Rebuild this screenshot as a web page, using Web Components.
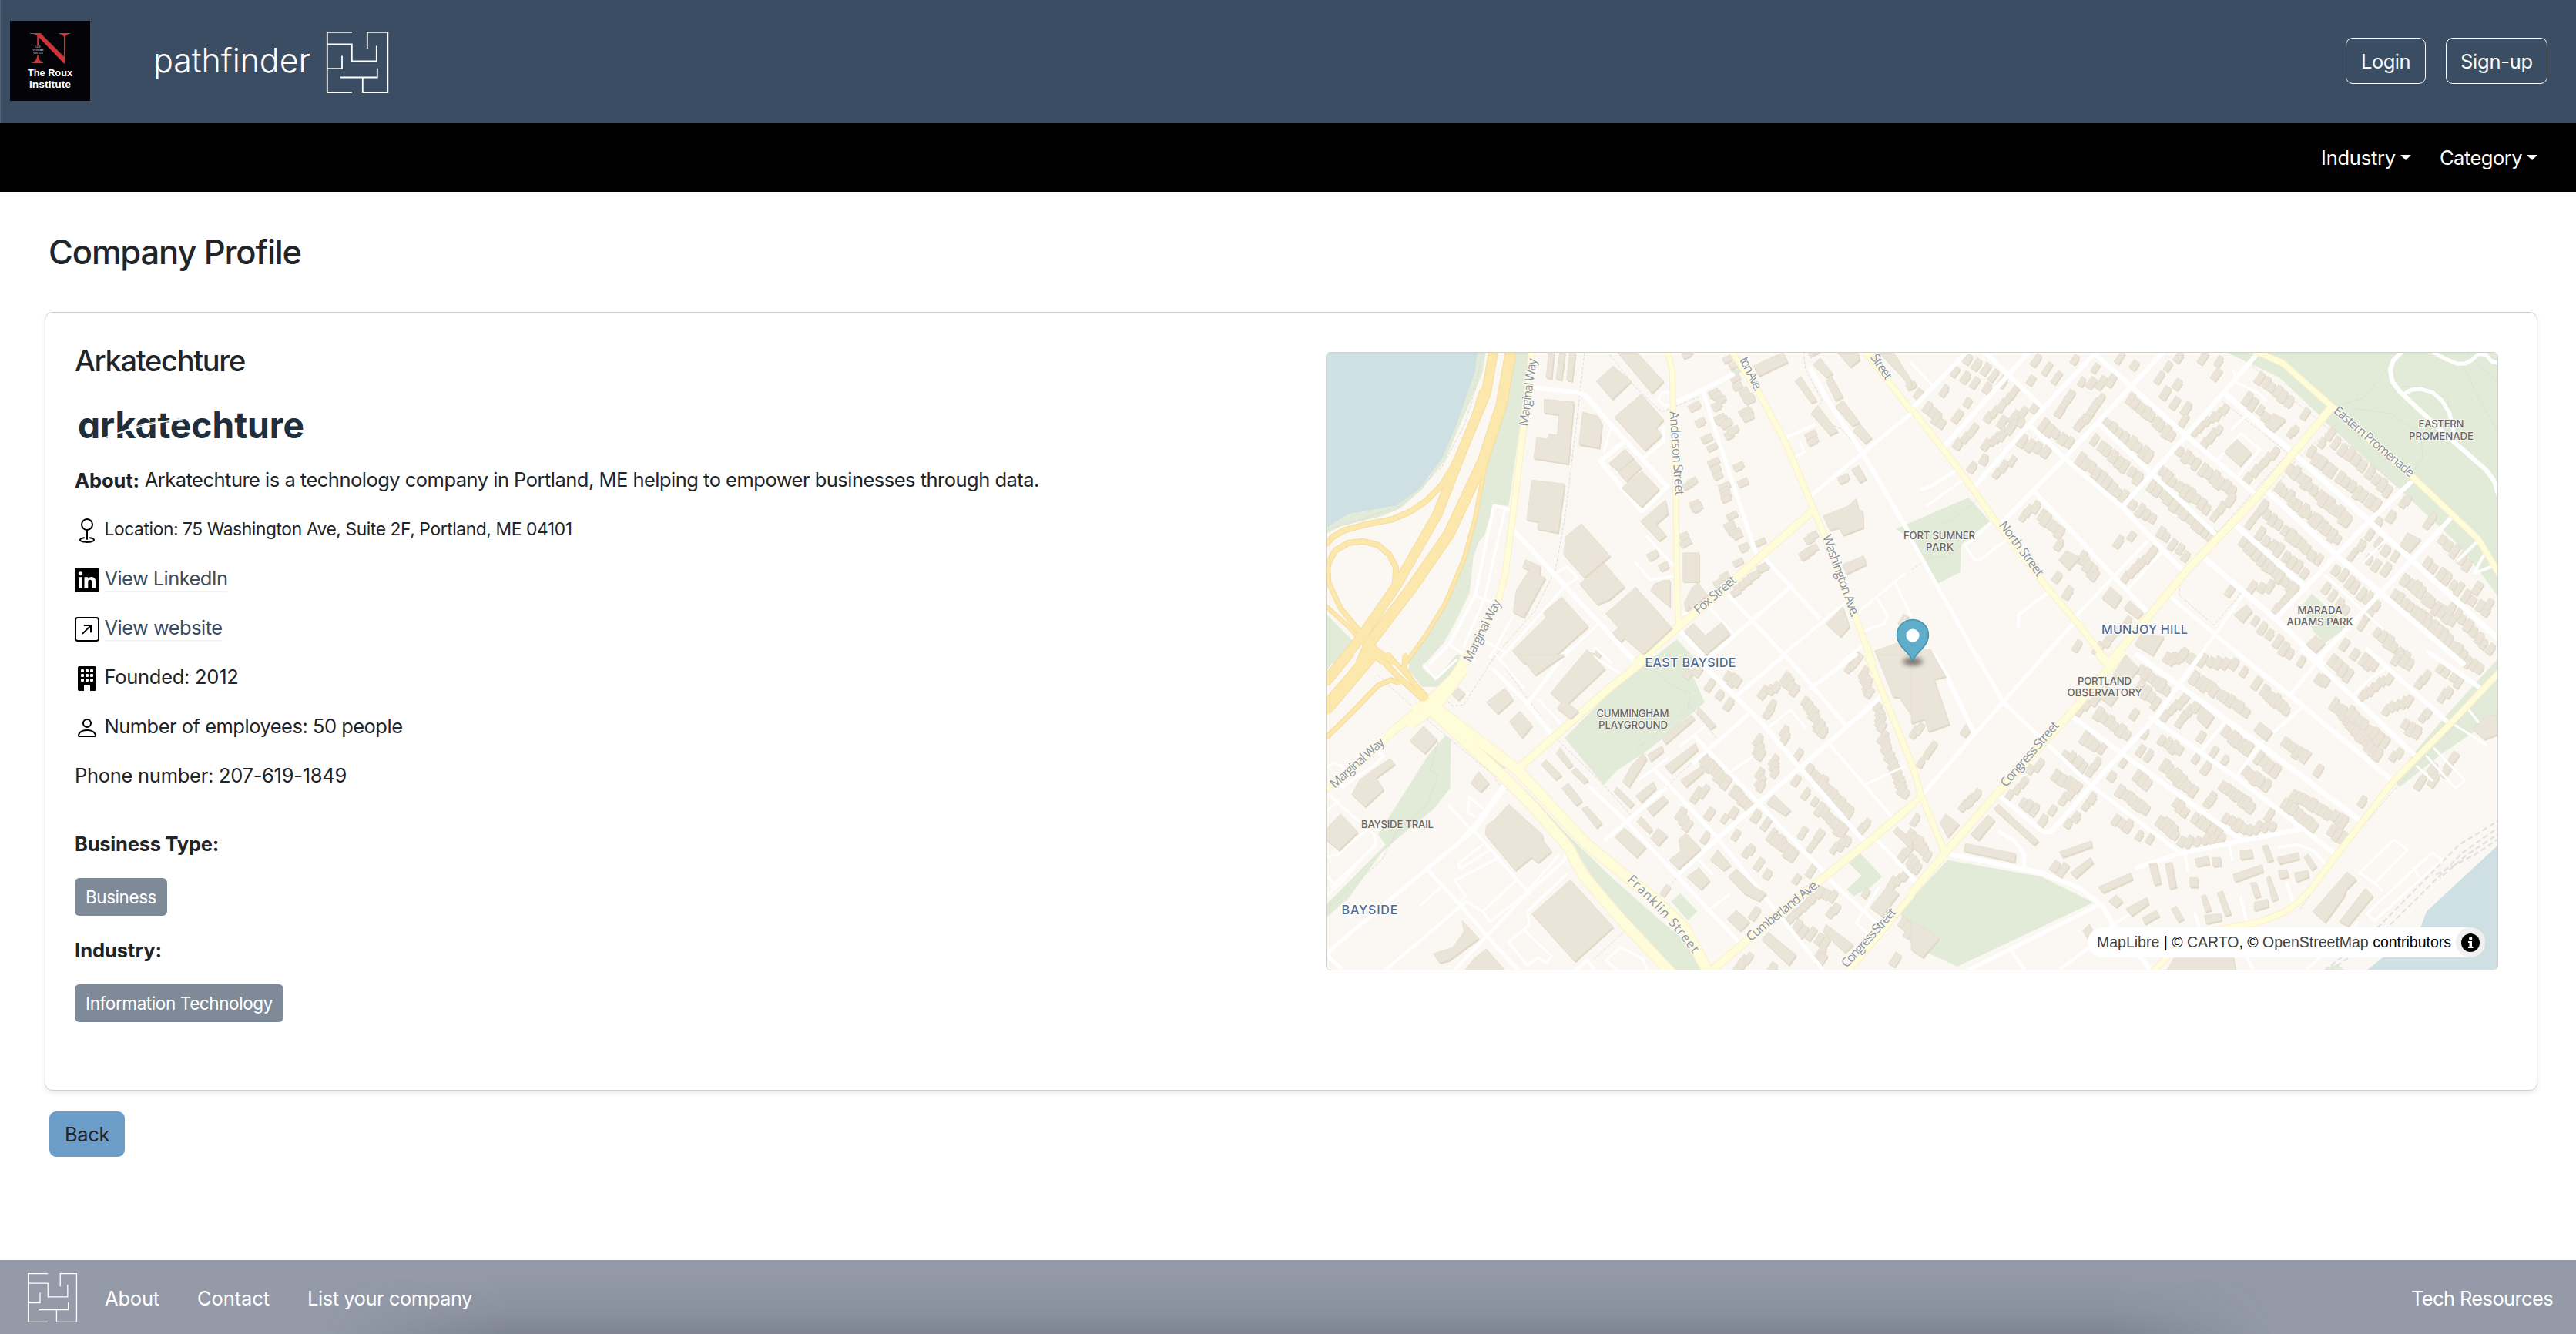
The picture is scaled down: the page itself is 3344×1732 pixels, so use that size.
<!DOCTYPE html>
<html lang="en">
<head>
<meta charset="utf-8">
<title>Pathfinder - Company Profile</title>
<style>
html,body{margin:0;height:100%;background:#fff}
body{font-family:Inter,"Liberation Sans",sans-serif;font-size:25.5px;color:#212529;overflow:hidden}
</style>
</head>
<body>
<pf-app></pf-app>
<script>
function define(name, html, setup){
  const tpl = document.createElement('template');
  tpl.innerHTML = html;
  customElements.define(name, class extends HTMLElement{
    constructor(){ super(); this.attachShadow({mode:'open'}).appendChild(tpl.content.cloneNode(true)); }
    connectedCallback(){ if(setup) setup(this, this.shadowRoot); }
  });
}

/* A one-line label tracked to an exact advance width */
define('fit-text', `<style>:host{display:inline-block;white-space:pre;flex:none}span{display:inline-block}</style><span><slot></slot></span>`,
(el, root) => {
  const s = root.querySelector('span'), w = +el.getAttribute('w'), n = el.textContent.length;
  const natural = s.getBoundingClientRect().width;
  const ls = (w - natural) / n;
  s.style.letterSpacing = ls.toFixed(3) + 'px';
});

define('maze-logo', `<style>:host{display:block;width:80px;height:80px}svg{display:block;width:100%;height:100%;overflow:visible}</style>
<svg viewBox="424.2 40.5 80 80" fill="none" stroke="#fff"><path d="M457 41.3H425V119.7H457M425 57H457V79H489V59M477 62.5V41.3H503.5V119.7H471V100M442 100H490V88M425 88.7H444.2V72"/></svg>`,
(el, root) => root.querySelector('svg').setAttribute('stroke-width', el.getAttribute('stroke') || 1.8));

define('roux-logo', `<style>:host{display:block;width:104px;height:104px;background:#040408}svg{display:block}</style>
<svg width="104" height="104" viewBox="0 0 104 104">
<g fill="#cf3438"><path d="M26 16H39.500L70 46.500V22C70 19 67 17.500 63.500 16.800V16H78V16.800C74.500 17.500 71.500 19 71.500 22V55.500H70L37 21V31.500H35.200V19C33 17.500 30 17 26 16.800Z"/><path d="M35.300 44.500H36.700C37 50 39.500 53 43.300 54V55H28.700V54C32.500 53 35 50 35.300 44.500Z"/></g>
<g fill="#ddd" font-family="Liberation Sans" font-size="3.400" text-anchor="middle"><text x="36.500" y="35.300">LUX</text><text x="36.500" y="39.200">VERITAS</text><text x="36.500" y="43">VIRTUS</text></g>
<g fill="#fff" font-family="Liberation Sans" font-weight="700" font-size="13.500" text-anchor="middle"><text x="52" y="72.300" textLength="58" lengthAdjust="spacingAndGlyphs">The Roux</text><text x="52" y="86.500" textLength="54" lengthAdjust="spacingAndGlyphs">Institute</text></g></svg>`);

define('outline-button', `<style>:host{display:flex;box-sizing:border-box;height:60px;border:1.500px solid #f8f9fa;border-radius:9px;align-items:center;justify-content:center;color:#f8f9fa}</style><slot></slot>`);

define('top-bar', `<style>:host{display:flex;height:160px;background:#3b4d63;align-items:center;padding:0 37px 0 13px;box-sizing:border-box;box-shadow:inset 1px 0 #50627a}
roux-logo{margin-top:-2px}.brand{display:flex;align-items:center;margin-left:82px;color:#fff;font-size:43px;font-weight:300;gap:21px}.brand fit-text{margin-top:-4px}maze-logo{margin-top:1px}
.actions{margin-left:auto;display:flex;gap:26px;margin-top:-2px}.a{width:104px}.b{width:132px}</style>
<roux-logo></roux-logo><div class="brand"><fit-text w="204">pathfinder</fit-text><maze-logo></maze-logo></div>
<div class="actions"><outline-button class="a"><fit-text w="64">Login</fit-text></outline-button><outline-button class="b"><fit-text w="94">Sign-up</fit-text></outline-button></div>`);

define('menu-item', `<style>:host{display:flex;align-items:center;color:#fff;gap:6px}i{width:0;height:0;border:7px solid transparent;border-top-color:#fff;border-bottom:0}</style><slot></slot><i></i>`);
define('menu-bar', `<style>:host{display:flex;justify-content:flex-end;height:89px;background:#000;align-items:center;gap:37px;padding-right:50px}</style>
<menu-item><fit-text w="97">Industry</fit-text></menu-item><menu-item><fit-text w="107">Category</fit-text></menu-item>`);

define('info-row', `<style>:host{display:flex;height:64px;align-items:center}::slotted(svg){width:32px;height:32px;margin:4px 6.500px 0 0;flex:none}::slotted(fit-text){margin-bottom:1.500px}::slotted(a){margin-bottom:1px}</style><slot></slot>`);
define('tag-badge', `<style>:host{display:flex;width:max-content;height:49px;border-radius:6px;background:#7f8a99;color:#fff;align-items:center;padding:0 14px;font-size:22.500px}</style><slot></slot>`);

define('company-logo', `<style>:host{display:block;width:300px;height:98px}svg{display:block;overflow:visible}</style>
<svg width="300" height="98"><text x="4" y="75.700" font-family="Inter" font-weight="700" font-size="48" fill="#202f3e" style="font-feature-settings:'cv11'" textLength="294" lengthAdjust="spacingAndGlyphs">arkatechture</text>
<g fill="none" stroke="#fff"><path d="M32 78Q62 67 85 61T150 49" stroke-width="1.900"/><path d="M62 67Q100 51 140 53" stroke-width="1.100"/></g></svg>`);

define('company-details', `<style>:host{display:block;font-size:25.500px}h2{margin:0;font-size:38px;font-weight:540;line-height:50px;height:50px}a{color:#3b4d63;text-decoration:none;display:block;box-shadow:0 1.500px #f1f2f4;line-height:32px}b{font-weight:650}
.loc{font-size:22.800px}h3{margin:0;font-size:25.500px;font-weight:650;height:39px;line-height:39px}.type{margin-top:37px}tag-badge{margin:25px 0 24.500px 0}</style>
<h2><fit-text w="221">Arkatechture</fit-text></h2>
<company-logo></company-logo>
<info-row><b><fit-text w="84">About:</fit-text></b><fit-text w="1168"> Arkatechture is a technology company in Portland, ME helping to empower businesses through data.</fit-text></info-row>
<info-row class="loc"><svg viewBox="0 0 16 16"><path fill-rule="evenodd" d="M8 1a3 3 0 1 0 0 6 3 3 0 0 0 0-6M4 4a4 4 0 1 1 4.500 3.969V13.500a.5.5 0 0 1-1 0V7.970A4 4 0 0 1 4 3.999zm2.493 8.574a.5.5 0 0 1-.411.575c-.712.118-1.280.295-1.655.493a1.300 1.300 0 0 0-.370.265.3.3 0 0 0-.057.090V14l.002.008.016.033a.6.6 0 0 0 .145.150c.165.130.435.270.813.395.751.250 1.820.414 3.024.414s2.273-.163 3.024-.414c.378-.126.648-.265.813-.395a.6.6 0 0 0 .146-.150l.015-.033L12 14v-.004a.3.3 0 0 0-.057-.090 1.300 1.300 0 0 0-.370-.264c-.376-.198-.943-.375-1.655-.493a.5.5 0 1 1 .164-.986c.770.127 1.452.328 1.957.594C12.500 13 13 13.400 13 14c0 .426-.260.752-.544.977-.290.228-.680.413-1.116.558-.878.293-2.059.465-3.340.465s-2.462-.172-3.340-.465c-.436-.145-.826-.330-1.116-.558C3.260 14.752 3 14.426 3 14c0-.599.500-1 .961-1.243.505-.266 1.187-.467 1.957-.594a.5.5 0 0 1 .575.411"/></svg><fit-text w="607">Location: 75 Washington Ave, Suite 2F, Portland, ME 04101</fit-text></info-row>
<info-row><svg viewBox="0 0 16 16"><path d="M0 1.146C0 .513.526 0 1.175 0h13.650C15.474 0 16 .513 16 1.146v13.708c0 .633-.526 1.146-1.175 1.146H1.175C.526 16 0 15.487 0 14.854zm4.943 12.248V6.169H2.542v7.225zm-1.200-8.212c.837 0 1.358-.554 1.358-1.248-.015-.709-.520-1.248-1.342-1.248S2.400 3.226 2.400 3.934c0 .694.521 1.248 1.327 1.248zm4.908 8.212V9.359c0-.216.016-.432.080-.586.173-.431.568-.878 1.232-.878.869 0 1.216.662 1.216 1.634v3.865h2.401V9.250c0-2.220-1.184-3.252-2.764-3.252-1.274 0-1.845.700-2.165 1.193v.025h-.016l.016-.025V6.169h-2.400c.030.678 0 7.225 0 7.225z"/></svg><a><fit-text w="160">View LinkedIn</fit-text></a></info-row>
<info-row><svg viewBox="0 0 16 16" fill="none" stroke="#000"><rect x=".5" y=".5" width="15" height="15" rx="1.500"/><path d="M5.300 10.700L10.300 5.700M6.300 5.500H10.500V9.700" stroke-linecap="round"/></svg><a><fit-text w="153">View website</fit-text></a></info-row>
<info-row><svg viewBox="0 0 16 16"><path fill-rule="evenodd" d="M3 0a1 1 0 0 0-1 1v14a1 1 0 0 0 1 1h3v-3.500a.5.5 0 0 1 .5-.5h3a.5.5 0 0 1 .5.5V16h3a1 1 0 0 0 1-1V1a1 1 0 0 0-1-1zM4 2.500a.5.5 0 0 1 .5-.5h1a.5.5 0 0 1 .5.5v1a.5.5 0 0 1-.5.5h-1a.5.5 0 0 1-.5-.5zM7 2.500a.5.5 0 0 1 .5-.5h1a.5.5 0 0 1 .5.5v1a.5.5 0 0 1-.5.5h-1a.5.5 0 0 1-.5-.5zM10 2.500a.5.5 0 0 1 .5-.5h1a.5.5 0 0 1 .5.5v1a.5.5 0 0 1-.5.5h-1a.5.5 0 0 1-.5-.5zM4 5.500a.5.5 0 0 1 .5-.5h1a.5.5 0 0 1 .5.5v1a.5.5 0 0 1-.5.5h-1a.5.5 0 0 1-.5-.5zM7 5.500a.5.5 0 0 1 .5-.5h1a.5.5 0 0 1 .5.5v1a.5.5 0 0 1-.5.5h-1a.5.5 0 0 1-.5-.5zM10 5.500a.5.5 0 0 1 .5-.5h1a.5.5 0 0 1 .5.5v1a.5.5 0 0 1-.5.5h-1a.5.5 0 0 1-.5-.5zM4 8.500a.5.5 0 0 1 .5-.5h1a.5.5 0 0 1 .5.5v1a.5.5 0 0 1-.5.5h-1a.5.5 0 0 1-.5-.5zM7 8.500a.5.5 0 0 1 .5-.5h1a.5.5 0 0 1 .5.5v1a.5.5 0 0 1-.5.5h-1a.5.5 0 0 1-.5-.5zM10 8.500a.5.5 0 0 1 .5-.5h1a.5.5 0 0 1 .5.5v1a.5.5 0 0 1-.5.5h-1a.5.5 0 0 1-.5-.5z"/></svg><fit-text w="174">Founded: 2012</fit-text></info-row>
<info-row><svg viewBox="0 0 16 16"><path d="M8 8a3 3 0 1 0 0-6 3 3 0 0 0 0 6m2-3a2 2 0 1 1-4 0 2 2 0 0 1 4 0m4 8c0 1-1 1-1 1H3s-1 0-1-1 1-4 6-4 6 3 6 4m-1-.004c-.001-.246-.154-.986-.832-1.664C11.516 10.680 10.289 10 8 10s-3.516.680-4.168 1.332c-.678.678-.830 1.418-.832 1.664z"/></svg><fit-text w="387">Number of employees: 50 people</fit-text></info-row>
<info-row><fit-text w="353">Phone number: 207-619-1849</fit-text></info-row>
<h3 class="type"><fit-text w="187">Business Type:</fit-text></h3>
<tag-badge><fit-text w="92">Business</fit-text></tag-badge>
<h3><fit-text w="113">Industry:</fit-text></h3>
<tag-badge><fit-text w="243">Information Technology</fit-text></tag-badge>`);

/* ---------- street map ---------- */
const SHEET = {a:[-1,-18,.48469],b:[759,-18,.49745],c:[-1,392,.48469],d:[759,392,.49745]};
const pts = (q,s) => { const n=s.trim().split(/[\s,]+/).map(Number), [ox,oy,k]=SHEET[q], r=[]; for(let i=0;i<n.length;i+=2) r.push([ox+n[i]*k, oy+n[i+1]/3]); return r; };
const str = p => p.map(v=>v[0].toFixed(1)+','+v[1].toFixed(1)).join(' ');
const rows = t => t.trim().split('\n').map(l=>l.trim()).filter(Boolean).map(l=>[l[0], l.slice(1).trim()]);

const WATER = `
a 0,40 408,40 400,130 350,340 310,470 250,585 190,650 60,683 0,738
d 1540,730 1345,1000 1330,1060 1180,1240 1540,1240`;
const PARK = `
a 408,40 430,40 420,130 400,200 370,300 320,470 255,590 200,660 150,690 40,730 0,760 0,738 60,683 190,650 250,585 310,470 350,340 400,130
a 515,40 545,40 520,340 490,650 450,645 425,765 410,790 395,850 390,930 385,990 345,1110 315,1185 265,1265 215,1265 330,1000 400,700 440,420
a 0,1070 75,1180 45,1265 0,1265
c 0,0 30,0 0,70
c 228,0 265,0 258,50 295,98 350,0 362,0 340,70 300,125 258,125 222,60
c 860,0 975,0 985,90 1015,185 900,330 850,385 780,450 745,508 640,325
a 860,1262 940,1170 1000,1262
c 320,315 335,330 333,520 290,600 205,700 150,770 60,950 0,1025 0,975 160,740 140,700 210,540 275,390
c 513,490 640,690 760,860 900,1040 960,1110 1008,1235 938,1235 820,1050 720,880 650,720
c 325,270 485,440 475,452
c 925,960 950,930 995,1000 970,1035
c 1430,770 1490,865 1460,905 1415,940 1395,915 1435,860 1400,810
a 1085,125 1112,110 1112,130 1095,145
b 150,618 205,710 130,800 128,908 68,955 0,780 -40,740
b 1045,992 1140,1120 1080,1185 1050,1140 1020,1040
b 820,50 1540,50 1540,1020 1480,900 1420,790 1270,580 1085,330 1060,290 960,150 890,100
d 1540,0 1480,100 1400,230 1320,370 1260,490 1275,515 1390,380 1540,230
d 95,800 340,865 475,965 120,1215 0,1130 -30,1000 0,950
d 1075,1228 1110,1205 1130,1228`;
const BLD = `
a 770,105 818,165 767,235 725,165
a 845,215 905,315 885,345 900,375 855,435 773,305
a 585,235 665,245 650,487 557,465 565,385 595,390 597,370 620,375 625,295 585,288
a 688,285 728,300 740,330 733,425 678,412
a 597,50 612,50 605,155 590,150
a 627,50 641,50 632,160 616,155
a 653,50 669,50 660,165 645,160
a 780,50 832,50 885,135 905,165 873,212
a 802,430 825,465 785,515 758,485
a 825,470 845,500 805,555 783,520
a 847,515 893,585 845,655 793,580
a 552,550 640,565 622,755 567,740 570,712 538,705
a 910,628 917,680 885,720 912,765 893,787 843,710
a 685,720 762,845 692,930 637,840 642,770
a 747,875 800,965 760,1015 727,1035 680,955
a 830,967 927,1125 850,1228 800,1165 790,1180 767,1145 785,1125 750,1070
a 632,1005 703,1120 590,1265 530,1265 500,1215 590,1085 583,1065
a 535,860 575,885 572,920 588,930 530,1085 502,1065 510,980 545,900 527,890
a 957,833 1000,833 1000,945 957,945
a 905,940 922,940 922,1045 870,980 880,955
a 998,950 1023,1000 965,1060 960,1030 980,970
a 985,1108 1017,1155 1060,1105 1083,1150 1018,1228 960,1140
a 1420,622 1427,665 1438,670 1440,735 1385,765 1375,735 1350,745 1332,690 1400,650
a 1440,845 1448,878 1395,915 1383,880
a 1145,105 1225,52 1237,90 1160,145
a 1385,1043 1403,1120 1378,1160 1340,1110
a 1272,145 1315,240 1300,250 1257,165
a 1325,75 1358,135 1340,150 1305,100
a 1353,140 1385,225 1365,240 1340,165
a 1385,238 1430,325 1410,340 1365,265
a 1318,260 1372,360 1350,375 1300,290
a 1430,330 1462,385 1445,408 1412,360
a 1427,492 1448,545 1430,560 1408,510
a 1470,1215 1530,1185 1570,1200 1570,1265 1485,1265
a 1370,50 1425,50 1430,80 1405,110
a 1480,50 1520,50 1568,160 1568,200 1545,150
c 480,130 502,175 460,230 430,185
c 520,220 553,275 525,325 492,260
c 355,128 373,150 355,178 338,155
c 700,-20 748,55 650,190 677,220 655,250 620,210 630,185 602,150
c 520,0 640,0 600,40 560,80
c 262,278 298,330 265,385 225,335
c 172,405 185,425 135,480 155,525 105,592 70,545 90,490 120,455
c 410,455 437,500 415,535 388,500
c 40,620 86,690 35,762 0,720 0,680
c 490,583 580,700 583,725 605,765 568,810 550,790 507,840 427,700 430,665 450,645
c 655,877 770,1060 667,1195 552,1010
c 365,1035 410,1105 330,1190 305,1200 288,1165 340,1140 370,1080
c 430,1145 480,1230 372,1230 400,1180
c 628,362 662,430 650,442 617,385
c 590,408 632,470 615,487 577,428
c 670,440 703,490 690,500 658,455
c 650,500 687,570 670,587 632,520
c 700,590 740,655 725,675 685,600
c 1000,205 1045,275 1030,290 992,225
c 980,235 988,250 910,348 900,325
c 990,345 997,370 925,462 908,435
c 1005,435 1012,455 965,515 950,490
c 800,675 857,750 832,790 775,710
c 965,695 1005,755 945,835 920,800 950,765 945,720
c 890,675 915,705 890,745 870,715
c 1000,830 1028,880 1005,915 967,865
c 780,515 825,580 815,597 772,535
c 877,495 885,520 845,575 830,550
c 905,550 917,570 875,627 860,600
c 845,630 875,680 865,695 833,650
c 850,385 860,405 812,515 795,495 820,430
c 900,355 905,375 870,415 862,390
c 1050,760 1085,820 1065,840 1030,800
c 1100,835 1150,905 1180,930 1160,960 1120,930 1078,865
c 1200,545 1245,605 1230,627 1180,580
c 1100,995 1135,1040 1110,1078 1075,1030
c 1185,1080 1260,1170 1240,1210 1168,1110
c 1340,1050 1413,1130 1390,1160 1332,1080
c 1505,900 1535,930 1490,1018 1458,985
c 1475,0 1570,0 1570,240 1535,165 1520,165
c 1530,670 1570,720 1570,760 1520,690
d 0,-20 50,-20 90,85 60,95 100,270 45,300 35,250 0,268
d 90,620 125,660 95,712 75,655
d 200,625 218,645 175,722 155,700
d 228,583 332,725 320,742 215,600
d 142,735 273,775 270,808 137,765
d 470,725 472,748 395,790 387,768
d 1137,847 1162,875 1135,915 1130,940 1080,1043 1048,1000
d 1185,910 1205,940 1140,1057 1117,1040
d 468,790 475,810 430,870 415,850
d 573,850 578,875 500,928 488,905
d 535,935 552,960 535,985 515,960
d 615,945 620,970 575,1018 560,990
d 560,0 595,55 560,115 525,80
d 510,120 540,160 520,200 490,165
d 755,195 790,240 770,285 745,250
d 910,262 943,300 925,335 893,295
d 0,1035 73,1105 30,1180 0,1150
d 690,1170 840,1175 848,1235 665,1235
d 640,810 652,890 635,898 620,815
d 680,808 692,905 675,912 663,815
d 740,795 775,785 778,815 745,825
d 785,790 808,790 808,822 788,825
d 727,868 748,868 748,905 727,905
d 858,765 888,758 892,790 860,798
d 930,740 945,800 930,808 915,745
d 955,790 1010,770 1013,795 960,815
d 1035,775 1058,825 1045,840 1025,790
d 958,840 980,838 985,865 962,872
d 1000,850 1035,840 1038,865 1005,885
d 840,855 915,818 918,845 845,885
d 900,885 912,940 897,948 885,890
d 935,860 958,950 942,960 927,870
d 895,965 930,952 933,980 895,998
d 768,935 783,995 768,1003 757,940
d 812,920 835,1010 820,1018 798,928
d 765,1015 808,1008 810,1035 770,1048
d 692,980 712,1030 697,1042 678,990
d 640,995 648,1018 610,1050 603,1025
d 465,1050 475,1075 460,1105 447,1075
d 1500,240 1530,235 1530,310 1495,330 1465,290
b 850,390 888,445 858,495 817,440
b 600,1150 660,1160 630,1233 583,1190
b 1295,755 1330,780 1300,832 1275,805
b 405,825 440,850 410,900 385,860
b 520,965 550,1005 530,1050 497,1010
b 570,1020 605,1065 590,1090 555,1050
b 875,1035 890,1060 865,1105 842,1075
b 945,290 978,315 945,362 922,335
b 1055,1155 1080,1185 1055,1222 1030,1190`;
/* rows of detached houses: x1,y1 x2,y2 count */
const HOUSES = `
b 150,75 235,165 5;b 115,130 195,195 4;b 0,185 20,215 2;b 40,265 80,330 4;b 85,205 87,207 1;b 118,298 119,299 1;b 150,250 151,251 1
b 200,305 270,205 5;b 240,320 320,265 4;b 120,410 160,355 3;b 195,415 285,320 7;b 160,500 161,501 1;b 190,470 191,471 1;b 225,520 260,480 3;b 290,400 350,435 4;b 345,335 410,405 5
b 325,85 380,155 3;b 310,160 311,161 1;b 425,80 426,81 1;b 385,280 415,225 3;b 435,340 495,240 6;b 445,170 520,165 4;b 480,115 481,116 1;b 545,75 585,100 2
b 510,325 620,460 8;b 570,230 680,380 9;b 440,465 550,615 9;b 480,395 590,540 8;b 655,520 770,660 9;b 700,440 835,590 10
b 580,645 630,700 4;b 650,750 700,820 4;b 630,575 785,770 12;b 790,690 835,630 3;b 740,355 815,275 6;b 765,410 800,350 4;b 715,850 716,851 1
b 668,108 669,109 1;b 645,148 646,149 1;b 692,180 693,181 1;b 660,215 661,216 1;b 690,250 720,275 2;b 695,68 696,69 1;b 760,75 761,76 1;b 800,85 801,86 1;b 798,140 799,141 1;b 710,315 711,316 1
b 880,235 925,300 4;b 910,150 985,240 6;b 1030,290 1031,291 1;b 990,370 991,371 2;b 880,540 945,445 5;b 1045,440 1095,370 3;b 1110,405 1245,590 9;b 1055,465 1210,650 11
b 990,505 1140,710 13;b 960,580 1110,780 13;b 885,715 920,650 4;b 930,685 1060,860 10;b 865,790 1000,980 12;b 910,760 1025,910 8;b 890,965 935,965 3;b 955,1050 1000,960 5
b 1080,970 1135,1060 4;b 1110,900 1190,1010 6;b 1150,840 1195,760 3;b 1190,860 1240,900 3;b 1220,790 1260,850 3;b 1215,720 1250,690 2;b 1285,640 1286,641 2;b 1350,715 1351,716 2;b 1385,780 1450,880 5
b 1345,870 1500,1060 10;b 1290,935 1410,1100 10;b 1260,995 1400,1170 11;b 1215,1040 1175,1110 3;b 1215,1140 1290,1235 6;b 1320,1070 1440,1230 10;b 1410,1050 1510,1210 8
b 900,1100 990,1230 6;b 1130,1190 1160,1230 2;b 1480,970 1510,1030 2;b 290,690 325,650 3;b 340,690 385,750 5;b 385,800 386,801 1;b 445,850 480,920 5;b 380,930 381,931 1;b 410,985 411,986 1;b 540,785 575,770 2
b 560,925 630,825 6;b 490,1205 560,1105 5;b 430,1200 431,1201 1;b 830,980 831,981 1;b 670,1240 760,1250 4
d 600,60 665,135 6;d 600,120 640,190 4;d 440,215 480,180 3;d 490,230 560,310 6;d 580,230 581,231 1;d 680,20 710,0 4;d 760,20 840,40 5;d 740,90 870,220 11;d 870,70 900,110 2;d 1020,30 1021,31 1;d 1060,90 1080,110 3;d 1100,20 1140,80 4;d 920,140 980,220 7
d 1105,190 1215,390 14;d 1145,220 1235,340 8;d 1260,400 1261,401 2;d 665,235 715,165 5;d 700,260 740,200 4;d 820,300 880,370 7;d 975,340 1030,400 6;d 1065,455 1066,456 1
d 450,325 495,365 4;d 400,390 465,455 5;d 380,470 435,520 5;d 610,305 611,306 1;d 600,370 620,390 2;d 655,330 700,375 4;d 755,320 756,321 1;d 790,375 820,410 2;d 740,410 771,445 2;d 550,420 525,470 2;d 480,420 481,421 1
d 660,435 735,530 9;d 870,450 925,510 5;d 905,400 950,450 4;d 815,510 885,590 8;d 775,575 776,576 2;d 590,470 615,505 3;d 310,445 330,425 2;d 290,500 255,545 3;d 290,575 320,600 3
d 395,560 415,540 2;d 345,645 366,610 2;d 410,660 432,635 2;d 455,590 471,560 2;d 545,535 610,600 7;d 535,640 565,665 3;d 595,700 625,720 2;d 650,645 690,700 5;d 690,580 715,610 3;d 740,635 800,690 5;d 705,730 810,712 6
d 820,635 865,680 4;d 885,680 945,668 4;d 935,620 936,621 1;d 975,580 1050,665 8;d 995,545 1130,650 11;d 1095,685 1130,710 3;d 1180,575 1181,576 1;d 135,590 170,545 4;d 375,820 395,835 2
d 1180,20 1210,40 3;d 1175,155 1245,95 6;d 1265,20 1300,35 3;d 1330,105 1345,85 3;d 1390,160 1391,161 2;d 1240,215 1300,180 5;d 1340,240 1341,241 2;d 1290,270 1320,300 3;d 1380,50 1430,100 4;d 1440,10 1480,50 4
d 1325,500 1326,501 2;d 1365,490 1360,440 3;d 1395,455 1415,400 3;d 10,300 11,301 2;d 45,375 46,376 2;d 25,420 26,421 1;d 140,300 141,301 1;d 10,640 11,641 1;d 0,700 40,780 6;d 0,800 15,830 3
c 1295,450 1400,610 11;c 1325,600 1385,690 7;c 1195,700 1250,780 7;c 1435,675 1436,676 2;c 1395,725 1360,755 3;c 1280,690 1281,691 1;c 1300,750 1320,700 3;c 1285,545 1310,575 2;c 1155,335 1165,390 4;c 1200,410 1205,460 3;c 1160,465 1165,515 3
c 1265,385 1266,386 1;c 1225,295 1230,325 2;c 1180,230 1195,200 3;c 1175,150 1205,130 3;c 1230,90 1255,140 4;c 1285,180 1330,300 8;c 1080,80 1100,110 3;c 1030,115 1031,116 1;c 1055,155 1076,190 2;c 1440,70 1455,150 7;c 1480,205 1490,280 5;c 1490,320 1545,520 12;c 1550,540 1551,541 1
c 985,555 1010,530 3;c 950,620 970,660 3;c 1025,620 1026,621 1;c 1070,635 1092,615 2;c 1155,632 1180,662 2;c 1100,705 1101,706 1;c 1125,770 1140,760 2;c 1160,820 1161,821 1;c 1185,855 1186,856 1;c 1010,400 1070,500 8;c 1095,530 1130,590 6;c 1260,490 1261,491 1
c 1260,875 1261,876 1;c 1298,840 1299,841 1;c 1150,1010 1151,1011 1;c 1240,1030 1305,950 7;c 1260,1060 1340,1120 5;c 1355,1000 1356,1001 2;c 1320,920 1360,940 3;c 1445,930 1446,931 1;c 1520,890 1560,840 4;c 1545,780 1560,760 2;c 1545,1040 1560,1080 3
c 1110,1210 1111,1211 3;c 1195,1215 1196,1216 1;c 1325,1160 1330,1190 3;c 1525,1185 1526,1186 1;c 910,920 911,921 1;c 1015,708 1016,709 1;c 1400,45 1420,15 3;c 970,70 995,60 2
a 1040,210 1060,235 3;a 1050,260 1051,261 1;a 990,265 991,267 1;a 1003,325 1004,332 1;a 1055,310 1070,330 3;a 1080,372 1081,374 2;a 1020,388 1032,425 2;a 1040,482 1051,530 3;a 1107,498 1119,558 2;a 970,573 971,574 2;a 1068,570 1072,625 4;a 990,640 993,660 3
a 1090,692 1091,693 1;a 1080,730 1105,768 4;a 1122,808 1163,795 2;a 1105,872 1106,873 1;a 1172,885 1173,887 1;a 960,765 961,790 2;a 1100,155 1102,180 2;a 1120,200 1135,240 4;a 1125,280 1130,305 3;a 1075,80 1090,100 2;a 1055,945 1070,925 2;a 1110,965 1145,925 4;a 1095,990 1096,991 1
a 1297,775 1298,777 2;a 1285,840 1305,820 4;a 875,842 905,882 2;a 1300,370 1305,400 2;a 1390,543 1391,544 1;a 970,60 971,61 1;a 1420,1240 1421,1250 2;a 1545,1095 1546,1096 1;a 710,1250 712,1252 2;a 1310,55 1320,60 1`;
const WHITE = `
a6 555,190 670,208 695,220 770,345 915,575 845,670 735,475 800,400
a3 765,340 745,440
a4 850,465 905,400 905,345
a3 920,208 900,210 890,235 905,258 920,258
a6 500,740 830,1260
a6 935,250 1090,140
a5 1010,205 1060,430 1155,845
a5 1170,845 1320,1085
a4 1228,388 1308,335
a5 1300,610 1568,290
a6 1300,120 1340,230 1440,450 1568,770
a3 1270,400 1282,440 1250,465
a4 495,665 450,650 400,1000 330,1190 280,1262
a3 480,665 425,1010 370,1200
a3 400,1000 450,1030
a3 330,1190 400,1255
a3 430,1180 480,1220 465,1250
a3 640,965 480,1225
a3 610,920 645,885 675,930 640,965
a3 500,1085 440,1240
a6 945,1130 1025,1260
a5 1250,960 1010,1262
a5 1080,1000 1240,1250
a4 1390,1030 1220,1235
a3 1030,1050 1090,1145
a3 860,770 930,880
a3 828,870 870,938 932,925
a3 730,1110 620,1262
a3 720,1200 765,1262
a3 1550,915 1430,1060
a3 1478,1015 1505,1080 1495,1110 1440,1140
a3 1525,950 1568,1080
a4 1440,1190 1380,1262
a3 950,1075 975,1065
b6 145,50 0,275
b6 305,55 85,420
b6 480,55 345,270 165,575
b6 655,55 400,465 235,720
b6 905,55 715,380 550,655
b6 190,50 345,270
b6 315,345 400,465 550,655 718,918
b6 480,60 720,380 900,605
b6 490,330 800,770
b7 820,215 1000,450 1195,710 1540,1180
b7 930,595 1115,850 1440,1265
b7 850,730 1030,970
b7 770,860 950,1090 1075,1265
b6 1310,550 1195,710 950,1090
b6 1410,695 1300,870 1060,1250
b5 680,1010 880,1260
b4 865,1000 740,1262
b6 325,600 620,1070
b5 435,1090 330,1262
b4 615,790 430,1080
b3 655,830 565,975
b3 0,95 55,180
b4 355,990 280,1075 280,1125
b5 0,780 180,1262
b3 210,715 140,805 165,860 180,860 250,780
b4 115,515 50,575 28,585
b3 135,550 40,650
b3 840,120 850,170 910,215 925,240
b3 880,290 835,355
b3 800,470 860,370 910,430 850,540
b3 1080,920 1180,1060 1230,1130
b6 1280,50 1258,85 1250,120 1255,165 1275,205 1400,380 1500,510 1522,555 1535,620
b5 1285,215 1305,198 1330,195 1360,208 1385,240 1405,290 1415,360
b5 1365,55 1400,82 1425,97 1445,97 1465,80 1480,58 1500,62 1515,88 1535,95
b4 1480,785 1425,865
b4 1500,825 1470,910
b4 1525,880 1475,910
b3 1240,780 1180,870
d6 60,0 95,90 165,310
d5 170,0 240,185 470,510 705,775
d5 350,0 165,310 35,535
d6 415,235 550,385 865,725
d7 590,0 690,110 910,350 1175,650
d6 855,0 990,160 1255,490
d6 1020,-20 1150,160 1320,400
d6 1190,-20 1405,270
d6 1350,-10 1485,130
d6 755,0 640,240 470,510 365,690 345,690 230,550
d5 1075,0 990,155
d4 1020,205 910,350 850,470
d6 625,245 850,480 1110,780
d4 820,260 760,370
d6 590,830 700,775 860,725 1015,680
d6 95,775 340,850 440,910 500,980 530,1060 630,1235
d5 490,975 150,1228
d5 230,690 270,725 295,780 295,830
d4 960,750 1010,740 1050,765 1085,820
d3 715,780 722,845
d3 830,745 838,800
d4 980,890 997,965
d4 860,945 875,1040
d4 740,1010 752,1060
d4 260,1150 300,1235
d4 535,1060 380,1235
d3 520,1060 580,1000
d3 1260,720 1295,760 1210,890 1170,850 1260,720
d3 1360,770 1385,800 1210,1035 1188,1010 1360,770
d3 1210,890 1230,920
d3 1310,830 1325,865
d3 1165,1045 1030,1228
d4 870,1160 895,1235
d3 1365,365 1445,490 1420,520 1345,395
d3 1320,435 1360,490
d3 1455,215 1500,300
d3 1420,275 1500,350
d3 1245,50 1200,90 1160,150
d6 0,870 12,885
c5 450,60 540,190 650,-20
c6 540,190 610,320
c5 710,520 805,650 1110,1125
c5 910,520 750,720
c6 1010,40 1165,260 1270,440 1440,725
c5 880,445 1050,715 1240,1060 1335,1235
c5 990,320 1160,580 1345,865
c6 1490,160 1270,440 1050,715 940,860
c5 1130,235 985,420
c5 1230,0 1390,270
c5 1230,0 1100,160
c5 1420,0 1300,130
c4 1345,340 1515,630
c5 1475,720 1570,865
c5 1345,870 1500,1080
c3 1180,290 1245,215 1285,285
c3 1080,460 1140,400
c3 950,355 1015,280
c3 840,485 915,405
c3 1445,505 1550,435
c3 1020,1000 1080,935
c3 1000,800 1035,855
c3 1480,910 1420,1045 1480,1120
c5 485,505 400,670 350,740 270,835 0,1165
c8 480,510 400,670 370,715
c5 270,835 370,990 440,1110 520,1235
c4 400,690 545,930
c4 645,750 640,800 540,930 340,1235
c4 370,970 160,1228
c5 0,1165 50,1235
c3 0,535 50,600 130,700 135,740 15,905
c3 130,740 40,890 0,940
c3 0,610 35,570
c3 0,790 30,780 110,680
c3 0,860 30,900
c3 420,740 355,815 360,835 440,760
c3 465,790 345,880 375,940 360,960
c3 510,880 420,1000 375,960
c3 305,910 255,975
c3 420,1000 440,1040 545,920
c3 625,780 540,920
c3 645,855 540,1000 545,1050 490,1120 540,1210 570,1180 590,1200 605,1175 530,1070
c3 330,590 395,690
c3 420,600 385,555 380,615 400,630
c3 455,0 530,130
c3 710,0 795,80
c3 570,175 640,285
c3 790,1140 750,1190 780,1228
c3 790,1140 850,1185 860,1228
c4 670,1228 700,1190 720,1228
c3 265,45 295,95 350,20
c3 0,440 20,420 50,440 40,520 130,430 155,395 135,370`;
const YELLOW = `
a9 553,40 530,340 500,700 480,920 462,1020 430,1100 375,1262
c12 385,-5 340,90 270,190 170,310
c12 370,60 300,200 230,270
c8 180,300 110,400 0,530
a8 913,40 928,120 930,280 938,620 940,900 945,1120
a11 1300,675 1170,840 1100,930 950,1115 830,1262
c11 872,0 760,130 510,450
a9 1080,30 1160,210 1230,400 1300,640 1345,800 1420,1090 1465,1262
c9 1450,0 1568,420
d9 0,415 25,545 88,770
a9 1440,40 1568,280
b9 0,270 130,520 220,710 350,960 430,1100 515,1262
d9 488,0 515,50
b11 1095,270 1000,440 900,620 720,900 620,1080 515,1262
d11 550,-5 515,55 415,230 230,530 90,770 0,930
c9 1570,935 1500,1060 1390,1250
b9 895,45 970,95 1095,260 1310,540 1480,780 1540,930
d9 1540,60 1400,280 1260,490 1110,780 1040,920 1010,965 970,1005 920,1035 880,1050 800,1070 700,1130 630,1235
c11 1570,585 1470,710 1340,860 1220,1000 1030,1235
d9 0,590 25,550
c15 270,200 480,480 560,600 650,750 690,860 790,1030 925,1240
c15 275,185 515,450 700,740 870,940 960,1060 1025,1240
c14 245,210 310,160`;
const HWY = `
a8 420,200 385,360 340,500 310,570 270,630 230,670 180,702 110,722 50,745 20,770 0,800
a6 430,470 400,700 370,860 320,1030 270,1150 215,1262
c7 213,0 210,50 235,110 268,170
a8 2,920 8,870 25,825 60,795 100,788 140,803 170,840 188,890 185,970 150,1060 95,1180
a7 5,880 8,950 40,1050 120,1190 180,1262
a6 0,1040 60,1120 150,1262
c8 135,-5 190,80 262,175
c6 165,-5 205,60 272,165
c7 0,325 60,240 140,120 175,98 195,110
a13 450,40 430,210 370,420 300,680 190,960 90,1170 40,1262
c14 65,-10 0,105
a15 497,40 470,260 420,480 330,760 230,970 120,1180 95,1262
c18 128,-10 65,100 0,210`;
const PATHS = `
a 420,50 400,200 370,340 310,500 200,650 100,700 0,745
a 693,55 670,350 640,700 615,900 560,1060 480,1190 440,1262
a 760,60 830,190 900,285 1000,225
a 1280,50 1285,120 1330,240 1300,300 1380,350 1430,430
c 455,0 620,330 740,500 820,630
c 455,0 370,195 340,200 320,175
c 140,80 260,240 450,470 460,500 490,530
c 880,60 920,115 975,150 970,210 830,370
c 970,190 1050,330
c 1020,375 950,460 905,530
c 300,340 280,450 300,470 270,590 190,690 150,800 0,990
c 805,1070 715,1190
c 940,870 890,950
b 175,625 110,700 70,730
b 0,900 50,850 100,850 130,800
b 1150,270 1250,290 1330,370 1335,460 1300,540
b 1090,270 1180,230 1240,120
b 1280,185 1340,190 1400,230 1410,330
b 1440,100 1480,230 1530,360
b 1450,60 1530,165
b 890,105 1270,575
b 810,240 1080,560 1195,725
b 1070,300 700,920 700,1000 790,1115 860,990
b 1110,330 1000,480 930,620
d 1500,130 1400,310 1270,510 1160,700 1015,990
d 445,230 520,90
d 1395,310 1410,340`;
const RAIL = `
d 1540,640 1430,740 1200,1090 1080,1228
d 1540,665 1440,770 1215,1105 1095,1228
d 1540,690 1450,780 1380,870
d 1535,715 1470,780 1365,860`;
const STREETS = [
['a','Marginal Way','541,342 565,72'],['a','Marginal Way','388,1262 472,1020'],['c','Marginal Way','24,522 162,342'],
['a','Anderson Street','921,283 937,617'],['a','ton Ave.','1108,80 1152,212'],['a','Street','1458,72 1502,168'],
['a','Washington Ave.','1330,770 1410,1093'],['a','Fox Street','998,1074 1105,940'],['b','North Street','228,725 332,934'],
['b','Eastern Promenade','1100,285 1304,545'],['d','Congress Street','248,518 390,272'],['c','Congress Street','1396,1222 1532,1000'],
['c','Cumberland Ave.','1138,1118 1328,895'],['c','Franklin Street','806,880 870,955 910,1020 945,1080 985,1168']];
const PLACES = [
['EASTERN',3168,555.3,59],['PROMENADE',3168,570.7,84],['FORT SUMNER',2516.5,699.7,93],['PARK',2517,715,36],
['MARADA',3010.500,796.7,58],['ADAMS PARK',3010.500,812,86],['PORTLAND',2731,889,70],['OBSERVATORY',2731,904,97],
['CUMMINGHAM',2118.500,931,94],['PLAYGROUND',2119,946.3,90],['BAYSIDE TRAIL',1813,1075.3,94]];
const HOODS = [['MUNJOY HILL',2783,823.3,112],['EAST BAYSIDE',2193.500,865.7,118],['BAYSIDE',1777,1187,73]];

function drawMap(){
  let seed = 7; const rnd = () => (seed = (seed*16807)%2147483647)/2147483647;
  const poly = (src,attr) => rows(src).map(([q,s])=>`<polygon points="${str(pts(q,s))}" ${attr}/>`).join('');
  const roads = src => rows(src).map(([q,s])=>{ const i=s.indexOf(' '); return [+s.slice(0,i), str(pts(q,s.slice(i)))]; });
  const line = (list,color,extra,cap) => list.map(([w,p])=>`<polyline points="${p}" stroke="${color}" stroke-width="${w+extra}" stroke-linecap="${cap}"/>`).join('');
  const large = rows(BLD).map(([q,s])=>str(pts(q,s))), small = [];
  HOUSES.trim().split(/[;\n]+/).forEach(h=>{
    h=h.trim(); const q=h[0], m=h.slice(2).split(' '), n=+m[2], [A,B]=pts(q,m[0]+' '+m[1]);
    for(let i=0;i<n;i++){
      const t=n>1?i/(n-1):0, spread=n>1&&Math.hypot(B[0]-A[0],B[1]-A[1])<3?9:0;
      const cx=A[0]+(B[0]-A[0])*t+(rnd()-.5)*3+i*spread*.5, cy=A[1]+(B[1]-A[1])*t+(rnd()-.5)*3-i*spread*.6;
      const left=cx<760&&cy<330;
      const ang=(left?-0.45:-0.98)+(rnd()-.5)*.08, L=left?6+rnd()*2:6+rnd()*3.5, W=3.4+rnd()*1.2;
      const u=[Math.cos(ang),Math.sin(ang)], v=[-u[1],u[0]], N=rnd()*2.5;
      const local=[[-L,-W],[L,-W],[L,W-N*.5],[L-N-1,W-N*.5],[L-N-1,W+N*.4],[-L+1,W+N*.4],[-L+1,W],[-L,W]];
      small.push(str(local.map(([a,b])=>[cx+u[0]*a+v[0]*b, cy+u[1]*a+v[1]*b])));
    }
  });
  const solid = (list,dx,dy) => `<g fill="#e1dac9">${list.map(b=>`<polygon points="${b}" transform="translate(${dx} ${dy})"/>`).join('')}</g><g fill="#ebe5d9" stroke="#e0d9c9" stroke-width=".6">${list.map(b=>`<polygon points="${b}"/>`).join('')}</g>`;
  const yl=roads(YELLOW), hw=roads(HWY), wh=roads(WHITE);
  let labels='', defs='';
  STREETS.forEach(([q,t,s],i)=>{
    const p=pts(q,s); let len=0; for(let k=1;k<p.length;k++) len+=Math.hypot(p[k][0]-p[k-1][0],p[k][1]-p[k-1][1]);
    const d = p.length>2 ? `M${p[0]}Q${p[2]} ${p[p.length-1]}` : 'M'+p.join('L');
    defs+=`<path id="s${i}" d="${d}"/>`;
    labels+=`<text font-size="16.500" class="st" textLength="${(len-2).toFixed(1)}"><textPath href="#s${i}" textLength="${(len-2).toFixed(1)}">${t}</textPath></text>`;
  });
  const put=(l,c,f)=>l.map(([t,x,y,w])=>`<text class="${c}" font-size="${f}" x="${x-1721}" y="${y-458}" text-anchor="middle" textLength="${w}">${t}</text>`).join('');
  return `<defs>${defs}<filter id="soft" x="-50%" y="-80%" width="200%" height="260%"><feGaussianBlur stdDeviation="3"/></filter></defs>
<rect width="1521" height="801" fill="#fbf8f3"/>${poly(WATER,'fill="#cee0e3"')}${poly(PARK,'fill="#e1ebd7"')}
<g fill="none" stroke="#dcdcdc" stroke-width="1" stroke-dasharray="4 2">${rows(PATHS).map(([q,s])=>`<polyline points="${str(pts(q,s))}"/>`).join('')}</g>
<g fill="none" stroke="#e0e1e1" stroke-width="2.200" stroke-dasharray="7 4">${rows(RAIL).map(([q,s])=>`<polyline points="${str(pts(q,s))}"/>`).join('')}</g>
${solid(small,.9,1.5)}
<g fill="none" stroke-linejoin="round">${line(wh,'#fff',0,'round')}${line(yl,'#fdeecb',0,'butt')}${line(hw,'#f6dc9c',0,'butt')}${line(yl,'#fefcd9',-2,'round')}${line(hw,'#fce8ad',-2,'round')}</g>
${solid(large,1.3,2)}
${labels}${put(PLACES,'pl',13.2)}${put(HOODS,'hd',16.2)}
<g transform="translate(761 401)"><ellipse cx="0" cy="0" rx="13" ry="5" fill="#000" opacity=".5" filter="url(#soft)"/><path d="M0-1C-4-12-20.500-20-20.500-34.500A20.500 20 0 0 1 20.500-34.500C20.500-20 4-12 0-1Z" fill="#60adca" stroke="#4693b0" stroke-width="1.500"/><circle cy="-34" r="8.600" fill="#fff"/></g>`;
}

define('map-attribution', `<style>:host{display:flex;align-items:center;height:39px;box-sizing:border-box;width:516px;background:#fff;border-radius:20px;padding-left:12px;font:19.500px "Liberation Sans",sans-serif;color:#000}a{color:#404040}i{margin-left:auto;display:flex;width:38px;height:39px;border-radius:50%;background:#f0f0f0;align-items:center;justify-content:center}svg{display:block}fit-text{margin-bottom:1px}</style>
<fit-text w="460"><a>MapLibre</a> | © <a>CARTO</a>, © <a>OpenStreetMap</a> contributors</fit-text><i><svg width="24" height="24" viewBox="0 0 24 24"><circle cx="12" cy="12" r="12"/><path fill="#fff" d="M10 6.300a2.200 2.200 0 1 1 4.400 0a2.200 2.200 0 1 1-4.400 0M9 10h5v7h1.500v2H9v-2h1.500v-5H9z"/></svg></i>`);

define('street-map', `<style>:host{display:block;position:relative;width:1520px;height:801px;border:1px solid #d0d0d0;border-radius:6px;overflow:hidden;box-sizing:content-box}svg.m{display:block}
text{font-family:"Open Sans",Inter,sans-serif;paint-order:stroke;stroke-linejoin:round}
.st{fill:#8c93a5;stroke:#fffdf0;stroke-width:2px}.pl{font-family:Inter;font-weight:500;fill:#666;stroke:#f7f5ee;stroke-width:2px}.hd{font-family:Inter;font-weight:500;fill:#506b92;stroke:#fff;stroke-width:2.500px}
map-attribution{position:absolute;right:16px;bottom:16px}</style><svg class="m" width="1521" height="801" viewBox="0 0 1521 801"></svg><map-attribution></map-attribution>`,
(el, root) => { root.querySelector('svg.m').innerHTML = drawMap(); });

define('profile-card', `<style>:host{display:flex;justify-content:space-between;box-sizing:border-box;height:1011px;border:1px solid #cfd0d2;border-radius:10px;padding:37px 50px 0 38px;box-shadow:0 3px 7px rgba(0,0,0,.08);background:#fff}street-map{margin-top:14px}</style><company-details></company-details><street-map></street-map>`);

define('page-main', `<style>:host{display:block;padding:0 50px 0 58px}h1{margin:0 0 0 5px;font-size:43.500px;font-weight:540;line-height:60px;padding:48px 0}
.back{display:flex;width:98px;height:59px;margin:27px 0 0 6px;border:0;border-radius:9px;background:#6c9dc9;align-items:center;justify-content:center;color:#212529;font:inherit;padding:0}</style>
<h1><fit-text w="328">Company Profile</fit-text></h1><profile-card></profile-card><button class="back"><fit-text w="58">Back</fit-text></button>`);

/* the footer carries a soft shade rising from the bottom edge */
define('page-footer', `<style>:host{display:flex;height:96px;align-items:center;box-sizing:border-box;padding:0 30px 0 36px;color:#fff;position:relative;background:#949aa8}:host::before{content:"";position:absolute;inset:0;background:linear-gradient(to top,rgba(60,66,78,.24),rgba(60,66,78,.1) 30%,transparent 80%);-webkit-mask-image:linear-gradient(to right,transparent 420px,#000 660px,#000 2740px,transparent 2950px);mask-image:linear-gradient(to right,transparent 420px,#000 660px,#000 2740px,transparent 2950px)}maze-logo{width:64px;height:64px;margin:2px 36px 0 0}nav{display:flex;gap:49px;margin-top:2px}.r{margin:2px 0 0 auto}maze-logo,nav,.r{position:relative}</style>
<maze-logo stroke="1.600"></maze-logo><nav><fit-text w="71">About</fit-text><fit-text w="94">Contact</fit-text><fit-text w="214">List your company</fit-text></nav><fit-text class="r" w="184">Tech Resources</fit-text>`);

define('pf-app', `<style>:host{display:flex;flex-direction:column;width:3344px;height:1732px}page-main{flex:1}</style><top-bar></top-bar><menu-bar></menu-bar><page-main></page-main><page-footer></page-footer>`);
</script>
</body>
</html>
